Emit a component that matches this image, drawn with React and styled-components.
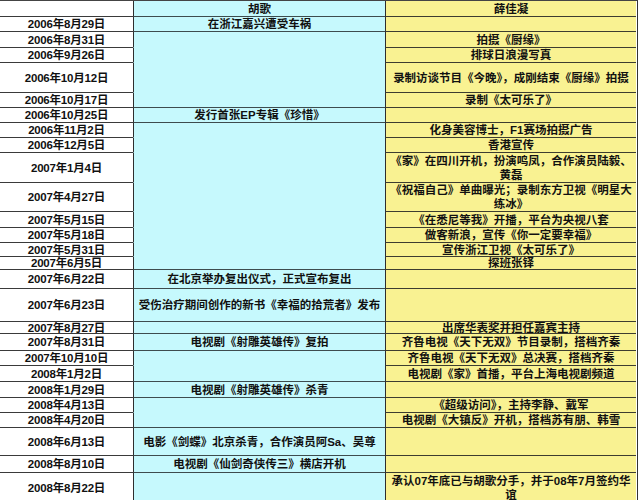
import React from "react";
import styled, { createGlobalStyle } from "styled-components";

const GlobalStyle = createGlobalStyle`
  html, body {
    margin: 0;
    padding: 0;
    background: #ffffff;
  }
  body {
    width: 640px;
    height: 500px;
    overflow: hidden;
    font-family: "Liberation Sans", "Noto Sans CJK SC", sans-serif;
    color: #111111;
  }
`;

const Sheet = styled.div`
  width: 637px;
  border-top: 1px solid #444;
  border-right: 1px solid #333;
`;

const Row = styled.div`
  display: grid;
  grid-template-columns: 133px 252px 251px;
  height: ${(p) => p.$h}px;
`;

const Cell = styled.div`
  display: flex;
  align-items: center;
  justify-content: center;
  text-align: center;
  white-space: pre;
  overflow: hidden;
  box-sizing: border-box;
  font-size: 11.5px;
  line-height: 14px;
  padding: 0 2px;
`;

const DateCell = styled(Cell)`
  background: #ffffff;
  border-bottom: 1px solid #3a3a3a;
  font-weight: 600;
  letter-spacing: -0.2px;
`;

const HuCell = styled(Cell)`
  background: #c6f9fd;
  border-left: 1px solid #2e2e2e;
  border-bottom: 1px solid ${(p) => (p.$line ? "#3d4c4e" : "#c6f9fd")};
  font-weight: 700;
`;

const XueCell = styled(Cell)`
  background: #f9f292;
  border-left: 1px solid #2e2e2e;
  border-bottom: 1px solid #3d3d30;
  font-weight: 700;
`;

const rows = [
  { h: 16, d: "", hu: "胡歌", xue: "薛佳凝" },
  { h: 15, d: "2006年8月29日", hu: "在浙江嘉兴遭受车祸", xue: "" },
  { h: 16, d: "2006年8月31日", hu: "", xue: "拍摄《厨缘》" },
  { h: 15, d: "2006年9月26日", hu: "", xue: "排球日浪漫写真" },
  { h: 30, d: "2006年10月12日", hu: "", xue: "录制访谈节目《今晚》，成刚结束《厨缘》拍摄" },
  { h: 15, d: "2006年10月17日", hu: "", xue: "录制《太可乐了》" },
  { h: 15, d: "2006年10月25日", hu: "发行首张EP专辑《珍惜》", xue: "" },
  { h: 15, d: "2006年11月2日", hu: "", xue: "化身美容博士，F1赛场拍摄广告" },
  { h: 15, d: "2006年12月5日", hu: "", xue: "香港宣传" },
  { h: 30, d: "2007年1月4日", hu: "", xue: "《家》在四川开机，扮演鸣凤，合作演员陆毅、\n黄磊" },
  { h: 29, d: "2007年4月27日", hu: "", xue: "《祝福自己》单曲曝光；录制东方卫视《明星大\n练冰》" },
  { h: 16, d: "2007年5月15日", hu: "", xue: "《在悉尼等我》开播，平台为央视八套" },
  { h: 15, d: "2007年5月18日", hu: "", xue: "做客新浪，宣传《你一定要幸福》" },
  { h: 14, d: "2007年5月31日", hu: "", xue: "宣传浙江卫视《太可乐了》" },
  { h: 13, d: "2007年6月5日", hu: "", xue: "探班张铎" },
  { h: 19, d: "2007年6月22日", hu: "在北京举办复出仪式，正式宣布复出", xue: "" },
  { h: 33, d: "2007年6月23日", hu: "受伤治疗期间创作的新书《幸福的拾荒者》发布", xue: "" },
  { h: 12, d: "2007年8月27日", hu: "", xue: "出席华表奖并担任嘉宾主持" },
  { h: 17, d: "2007年8月31日", hu: "电视剧《射雕英雄传》复拍", xue: "齐鲁电视《天下无双》节目录制，搭档齐秦" },
  { h: 15, d: "2007年10月10日", hu: "", xue: "齐鲁电视《天下无双》总决赛，搭档齐秦" },
  { h: 16, d: "2008年1月2日", hu: "", xue: "电视剧《家》首播，平台上海电视剧频道" },
  { h: 16, d: "2008年1月29日", hu: "电视剧《射雕英雄传》杀青", xue: "" },
  { h: 15, d: "2008年4月13日", hu: "", xue: "《超级访问》，主持李静、戴军" },
  { h: 15, d: "2008年4月20日", hu: "", xue: "电视剧《大镇反》开机，搭档苏有朋、韩雪" },
  { h: 28, d: "2008年6月13日", hu: "电影《剑蝶》北京杀青，合作演员阿Sa、吴尊", xue: "" },
  { h: 17, d: "2008年8月10日", hu: "电视剧《仙剑奇侠传三》横店开机", xue: "" },
  { h: 30, d: "2008年8月22日", hu: "", xue: "承认07年底已与胡歌分手，并于08年7月签约华\n谊" },
];

export default function App() {
  return (
    <>
      <GlobalStyle />
      <Sheet>
        {rows.map((r, i) => {
          const next = rows[i + 1];
          const line = !!r.hu || !!(next && next.hu);
          return (
            <Row key={i} $h={r.h}>
              <DateCell>{r.d}</DateCell>
              <HuCell $line={line}>{r.hu}</HuCell>
              <XueCell>{r.xue}</XueCell>
            </Row>
          );
        })}
      </Sheet>
    </>
  );
}
